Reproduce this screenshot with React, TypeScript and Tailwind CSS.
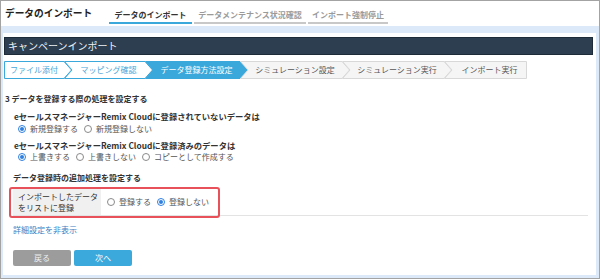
type StepState = 'done' | 'current' | 'todo';

// step widths include the chevron tip; neighbours overlap by the tip depth
const steps: { label: string; w: number; wCls: string; state: StepState }[] = [
  { label: 'ファイル添付', w: 68, wCls: 'w-[68px]', state: 'done' },
  { label: 'マッピング確認', w: 89, wCls: 'w-[89px]', state: 'done' },
  { label: 'データ登録方法設定', w: 103, wCls: 'w-[103px]', state: 'current' },
  { label: 'シミュレーション設定', w: 110, wCls: 'w-[110px]', state: 'todo' },
  { label: 'シミュレーション実行', w: 110, wCls: 'w-[110px]', state: 'todo' },
  { label: 'インポート実行', w: 83, wCls: 'w-[83px]', state: 'todo' },
];

const stepColors: Record<StepState, { fill: string; stroke: string; text: string }> = {
  done: { fill: '#ffffff', stroke: '#3ba8db', text: 'text-[#4aa6da]' },
  current: { fill: '#3ba8db', stroke: '#3ba8db', text: 'text-white' },
  todo: { fill: '#f5f5f5', stroke: '#d8d8d8', text: 'text-[#555]' },
};

const Step = ({ label, w, wCls, state, first, last }: { label: string; w: number; wCls: string; state: StepState; first: boolean; last: boolean }) => {
  const d = 8;
  const h = 18;
  const right = last ? w - 0.5 : w - d;
  const pts: number[][] = [
    [0.5, 0.5],
    [right, 0.5],
    ...(last ? [] : [[w - 0.5, h / 2]]),
    [right, h - 0.5],
    [0.5, h - 0.5],
    ...(first ? [] : [[d, h / 2]]),
  ];
  const c = stepColors[state];
  return (
    <div className={`relative h-[18px] shrink-0 flex items-center justify-center ${wCls} ${first ? '' : '-ml-[8px] pl-[8px]'} ${last ? '' : 'pr-[8px]'}`}>
      <svg className="absolute inset-0" width={w} height={h}>
        <polygon points={pts.map((p) => p.join(',')).join(' ')} fill={c.fill} stroke={c.stroke} strokeWidth={1} />
      </svg>
      <span className={`relative text-[8px] leading-none whitespace-nowrap ${c.text}`}>{label}</span>
    </div>
  );
};

const Radio = ({ checked, label }: { checked?: boolean; label: string }) => (
  <label className="flex items-center gap-[4px]">
    <span
      className={`w-[8px] h-[8px] rounded-full border flex items-center justify-center bg-white ${
        checked ? 'border-[#2f80e0]' : 'border-[#8a8a8a]'
      }`}
    >
      {checked && <span className="w-[4px] h-[4px] rounded-full bg-[#2f80e0]" />}
    </span>
    <span>{label}</span>
  </label>
);

export default function App() {
  return (
    <div
      className="w-[600px] h-[279px] border border-[#a3a3a3] bg-white flex flex-col overflow-hidden text-[#333]"
      style={{ fontFamily: '"Noto Sans CJK JP", "Noto Sans", sans-serif' }}
    >
      {/* page title + tabs */}
      <div className="h-[25px] flex items-end pb-[2px] shrink-0">
        <div className="w-[108px] self-stretch flex items-center pl-[4px] pt-[1px] text-[9.7px] font-bold text-[#222]">
          データのインポート
        </div>
        <div className="flex items-end gap-[2px]">
          <div className="w-[83px] h-[16px] flex items-center justify-center border-b-2 border-[#3ba8db] text-[8px] font-bold text-[#333]">
            データのインポート
          </div>
          <div className="w-[112px] h-[16px] flex items-center justify-center border-b-2 border-[#c8c8c8] text-[8px] font-bold text-[#9a9a9a]">
            データメンテナンス状況確認
          </div>
          <div className="w-[80px] h-[16px] flex items-center justify-center border-b-2 border-[#c8c8c8] text-[8px] font-bold text-[#9a9a9a]">
            インポート強制停止
          </div>
        </div>
      </div>

      <div className="flex-1 flex flex-col bg-[#dbe9f8] pl-[2px] pr-[3px] pt-[7px] pb-[3px] min-h-0">
        <div className="flex-1 flex flex-col bg-white pl-[1px] pr-[3px] pt-[4px]">
          <div className="h-[18px] flex items-center pl-[3px] bg-[#2d3e50] border border-[#1d2a38] text-[10px] text-[#eef2f6] leading-none">
            キャンペーンインポート
          </div>

          <div className="flex mt-[6px]">
            {steps.map((s, i) => (
              <Step key={s.label} {...s} first={i === 0} last={i === steps.length - 1} />
            ))}
          </div>

          <div className="mt-[14px] pl-[1px] text-[8px] leading-[12px] font-bold text-[#333]">
            3 データを登録する際の処理を設定する
          </div>

          <div className="pl-[10px] text-[8px] leading-[12px]">
            <div className="mt-[5px] text-[8.3px] font-bold text-[#333]">eセールスマネージャーRemix Cloudに登録されていないデータは</div>
            <div className="mt-[1px] pl-[4px] flex items-center gap-[6px] text-[#555]">
              <Radio checked label="新規登録する" />
              <Radio label="新規登録しない" />
            </div>
            <div className="mt-[4px] text-[8.3px] font-bold text-[#333]">eセールスマネージャーRemix Cloudに登録済みのデータは</div>
            <div className="pl-[4px] flex items-center gap-[6px] text-[#555]">
              <Radio checked label="上書きする" />
              <Radio label="上書きしない" />
              <Radio label="コピーとして作成する" />
            </div>
          </div>

          <div className="mt-[9px] pl-[9px] text-[8px] leading-[12px] font-bold text-[#333]">
            データ登録時の追加処理を設定する
          </div>

          {/* additional processing row, highlighted by a red frame */}
          <div className="relative mt-[5px] ml-[9px] w-[575px] flex border-b border-[#e3e3e3]">
            <div className="w-[88px] h-[26px] bg-[#f0f0f0] flex flex-col justify-center pl-[5px] text-[8px] leading-[11.5px] text-[#333]">
              <span>インポートしたデータ</span>
              <span>をリストに登録</span>
            </div>
            <div className="flex items-center gap-[6px] pl-[6px] text-[8px] text-[#555]">
              <Radio label="登録する" />
              <Radio checked label="登録しない" />
            </div>
            <div className="absolute -left-[4px] -top-[2px] w-[211px] h-[31px] border-2 border-[#e8505a] rounded-[3px]" />
          </div>

          <div className="mt-[8px] pl-[9px] text-[8px] leading-[12px] text-[#3a7fc4]">詳細設定を非表示</div>

          <div className="mt-[14px] pl-[9px] flex gap-[3px]">
            <button className="w-[58px] h-[16px] rounded-[2px] bg-[#9c9c9c] text-[8px] text-[#eeeeee] flex items-center justify-center">
              戻る
            </button>
            <button className="w-[58px] h-[16px] rounded-[2px] bg-[#3ba9dc] text-[8px] text-white flex items-center justify-center">
              次へ
            </button>
          </div>
        </div>
      </div>
    </div>
  );
}
